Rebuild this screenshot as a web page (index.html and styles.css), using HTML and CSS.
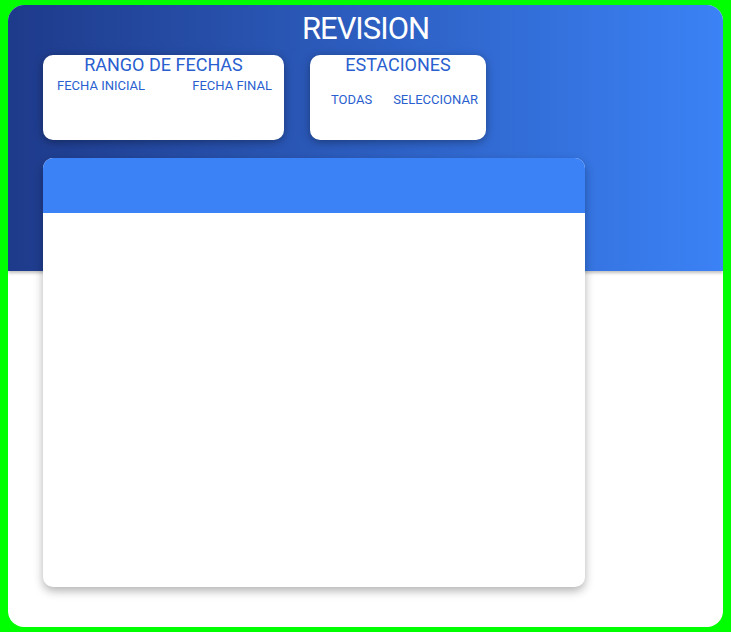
FILE: index.html
```html
<!DOCTYPE html>
<html lang="es">
<head>
<meta charset="utf-8">
<title>Revision</title>
<link rel="stylesheet" href="styles.css">
</head>
<body>
<div class="frame">
  <header class="hero">
    <h1 class="title">REVISION</h1>
    <div class="filters">
      <section class="card card-dates">
        <h2 class="card-title">RANGO DE FECHAS</h2>
        <div class="labels">
          <span class="label">FECHA INICIAL</span>
          <span class="label">FECHA FINAL</span>
        </div>
      </section>
      <section class="card card-stations">
        <h2 class="card-title">ESTACIONES</h2>
        <div class="options">
          <span class="label">TODAS</span>
          <span class="label">SELECCIONAR</span>
        </div>
      </section>
    </div>
  </header>
  <main class="panel">
    <div class="panel-head"></div>
    <div class="panel-body"></div>
  </main>
</div>
</body>
</html>
```
FILE: styles.css
```css
html, body {
  margin: 0;
  padding: 0;
  background: #00ff00;
}
body {
  padding: 5px 8px;
  font-family: Roboto, "Liberation Sans", sans-serif;
}
.frame {
  height: 622px;
  background: #ffffff;
  border-radius: 16px;
  overflow: hidden;
  display: flex;
  flex-direction: column;
}
.hero {
  height: 266px;
  flex: none;
  background: linear-gradient(to right, #1e3a8a, #3b82f6);
  box-shadow: 0 2px 3px rgba(0, 0, 0, 0.25);
  box-sizing: border-box;
  padding-top: 4px;
}
.title {
  margin: 0;
  height: 38px;
  line-height: 40px;
  font-size: 31px;
  font-weight: 400;
  letter-spacing: -1px;
  color: #ffffff;
  text-align: center;
}
.filters {
  display: flex;
  gap: 26px;
  margin-top: 8px;
  padding-left: 35px;
}
.card {
  height: 85px;
  background: #ffffff;
  border-radius: 10px;
  box-shadow: 0 2px 8px rgba(0, 0, 0, 0.35);
  box-sizing: border-box;
  color: #2a5fcf;
}
.card-dates { width: 241px; }
.card-stations { width: 176px; }
.card-title {
  margin: 0;
  font-size: 18px;
  font-weight: 400;
  line-height: 20px;
  text-align: center;
}
.label {
  font-size: 13px;
  line-height: 16px;
  font-weight: 400;
}
.labels {
  display: flex;
  justify-content: space-between;
  margin-top: 3px;
  padding: 0 12px 0 14px;
}
.options {
  display: flex;
  gap: 21px;
  margin-top: 17px;
  padding-left: 21px;
}
.panel {
  margin: -113px 0 0 35px;
  width: 542px;
  height: 429px;
  background: #ffffff;
  border-radius: 10px;
  overflow: hidden;
  box-shadow: 0 4px 10px rgba(0, 0, 0, 0.3);
  display: flex;
  flex-direction: column;
  position: relative;
}
.panel-head {
  height: 55px;
  background: #3b82f6;
}
.panel-body {
  flex: 1;
}
```
